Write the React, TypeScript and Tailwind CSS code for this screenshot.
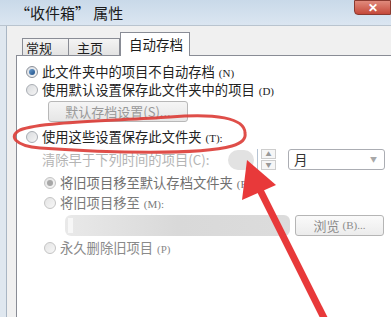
import React from "react";

function Radio({ checked = false, disabled = false }: { checked?: boolean; disabled?: boolean }) {
  return (
    <span
      className={
        "relative inline-flex w-[12px] h-[12px] shrink-0 items-center justify-center rounded-full border " +
        (disabled
          ? "border-[#c4c4c4] bg-gradient-to-br from-[#e4e4e4] to-[#f7f7f7]"
          : checked
          ? "border-[#8b9099] bg-gradient-to-br from-[#dcdfe4] to-[#f4f5f6]"
          : "border-[#a9adb3] bg-gradient-to-br from-[#d9dbde] to-[#f5f5f5]")
      }
    >
      {checked && (
        <span
          className={
            "w-[6px] h-[6px] rounded-full " +
            (disabled ? "bg-[#a7a7a7]" : "bg-gradient-to-br from-[#6b9fd1] to-[#1f4f86]")
          }
        />
      )}
    </span>
  );
}

function Mn({ children }: { children: React.ReactNode }) {
  return <span className="text-[11px] ml-[4px] font-['Liberation_Serif',serif]">{children}</span>;
}

export default function App() {
  return (
    <div className="relative w-[391px] h-[317px] overflow-hidden bg-white font-['Noto_Sans_CJK_SC',sans-serif] text-[13.3px] leading-none">
      {/* title bar */}
      <div className="relative h-[26px] bg-gradient-to-b from-[#c9d9e9] to-[#dbe6f1] flex items-center pl-[15px] border-b border-[#b9c4cf]">
        <span className="text-[15px] text-[#1b1b1b]">“收件箱” 属性</span>
        <div className="absolute right-0 top-0 w-[37px] h-[15px] rounded-bl-[4px] border border-[#8a3a30] bg-gradient-to-b from-[#e08a7c] to-[#c4483a] flex items-center justify-center">
          <span className="text-white text-[12px] font-bold font-['Liberation_Sans',sans-serif]">✕</span>
        </div>
      </div>

      {/* body */}
      <div className="flex h-[291px]">
        <div className="w-[7px] bg-[#dfe7ef] border-r border-[#a9b6c4]" />
        <div className="flex-1 flex flex-col bg-[#f0f0f0] pl-[9px] pt-[6px]">
          {/* tabs */}
          <div className="flex items-end h-[23px] pl-[6px] relative z-10">
            <div className="w-[47px] h-[17px] border border-b-0 border-[#898c95] bg-gradient-to-b from-[#f4f4f4] to-[#e3e3e3] text-[13px] text-[#1e1e1e] pl-[3px] flex items-center">
              常规
            </div>
            <div className="w-[51px] h-[17px] border border-l-0 border-b-0 border-[#898c95] bg-gradient-to-b from-[#f4f4f4] to-[#e3e3e3] text-[13px] text-[#1e1e1e] pl-[8px] flex items-center">
              主页
            </div>
            <div className="w-[70px] h-[24px] mb-[-1px] border border-b-0 border-[#898c95] bg-white text-[13.5px] text-[#1e1e1e] pl-[8px] flex items-center">
              自动存档
            </div>
          </div>

          {/* panel */}
          <div className="flex-1 bg-white border-l border-t border-[#898c95] pl-[9px] pt-[7px] flex flex-col text-[#222]">
            <div className="h-[18px] flex items-center gap-[4px]">
              <Radio checked />
              <span>
                此文件夹中的项目不自动存档<Mn>(N)</Mn>
              </span>
            </div>
            <div className="h-[18px] flex items-center gap-[4px]">
              <Radio />
              <span>
                使用默认设置保存此文件夹中的项目<Mn>(D)</Mn>
              </span>
            </div>
            <div className="mt-[2px] ml-[22px] w-[140px] h-[21px] border border-[#b8b8b8] rounded-[3px] bg-gradient-to-b from-[#f5f5f5] to-[#e6e6e6] flex items-center justify-center text-[#9a9a9a] text-[13px]">
              默认存档设置(S)...
            </div>
            <div className="mt-[6px] h-[18px] flex items-center gap-[4px]">
              <Radio />
              <span>
                使用这些设置保存此文件夹<Mn>(T):</Mn>
              </span>
            </div>
            <div className="mt-[3px] h-[21px] flex items-center">
              <span className="ml-[16px] w-[186px] text-[#b4b4b4]">清除早于下列时间的项目(C):</span>
              <div className="w-[30px] h-[21px] border-r border-[#b5c3d3] flex items-center">
                <div className="w-[26px] h-[20px] rounded-full bg-[#e2e2e2]" />
              </div>
              <div className="ml-[3px] w-[15px] h-[21px] flex flex-col">
                <div className="h-[10px] border border-[#cdcdcd] bg-[#f6f6f6] flex items-center justify-center text-[6px] text-[#999]">▲</div>
                <div className="h-[10px] mt-[1px] border border-[#cdcdcd] bg-[#f6f6f6] flex items-center justify-center text-[6px] text-[#999]">▼</div>
              </div>
              <div className="ml-[12px] w-[97px] h-[21px] border border-[#abadb3] rounded-[3px] bg-white flex items-center justify-between pl-[5px] pr-[7px]">
                <span className="text-[#333] text-[13.5px]">月</span>
                <span className="text-[7px] text-[#a8a8a8]">▼</span>
              </div>
            </div>
            <div className="mt-[4px] ml-[18px] h-[18px] flex items-center gap-[4px] text-[#707070]">
              <Radio checked disabled />
              <span>
                将旧项目移至默认存档文件夹<Mn>(F)</Mn>
              </span>
            </div>
            <div className="mt-[2px] ml-[18px] h-[18px] flex items-center gap-[4px] text-[#7a7a7a]">
              <Radio disabled />
              <span>
                将旧项目移至<Mn>(M):</Mn>
              </span>
            </div>
            <div className="mt-[3px] ml-[39px] h-[21px] flex items-center gap-[5px]">
              <div className="w-[225px] h-[21px] rounded-[6px] bg-gradient-to-r from-[#e9e9e9] via-[#d9d9d9] to-[#dcdcdc] flex items-center pl-[3px]">
                <div className="w-[5px] h-[15px] bg-[#f7f7f7]" />
              </div>
              <div className="w-[89px] h-[21px] border border-[#b5b5b5] rounded-[3px] bg-gradient-to-b from-[#fafafa] to-[#ececec] flex items-center justify-center text-[#8c8c8c] text-[13px]">
                浏览<span className="text-[11px] ml-[3px] font-['Liberation_Serif',serif]">(B)...</span>
              </div>
            </div>
            <div className="mt-[3px] ml-[18px] h-[18px] flex items-center gap-[4px] text-[#8a8a8a]">
              <Radio disabled />
              <span>
                永久删除旧项目<Mn>(P)</Mn>
              </span>
            </div>
          </div>
        </div>
      </div>

      {/* red annotation overlay */}
      <svg className="absolute left-0 top-0 pointer-events-none" width="391" height="317" viewBox="0 0 391 317">
        <path
          d="M 245 133 C 245 118, 215 113, 170 117 C 110 121, 40 122, 20 130 C 8 136, 15 146, 40 148 C 110 153, 200 155, 232 146 C 242 143, 246 138, 245 133 Z"
          fill="none"
          stroke="#dc3b35"
          strokeWidth="3"
          opacity="0.9"
        />
        <line x1="259" y1="188" x2="330" y2="330" stroke="#e8393a" strokeWidth="7" strokeLinecap="round" />
        <polygon points="247,160 276,185 242,200" fill="#e8393a" />
      </svg>
    </div>
  );
}
